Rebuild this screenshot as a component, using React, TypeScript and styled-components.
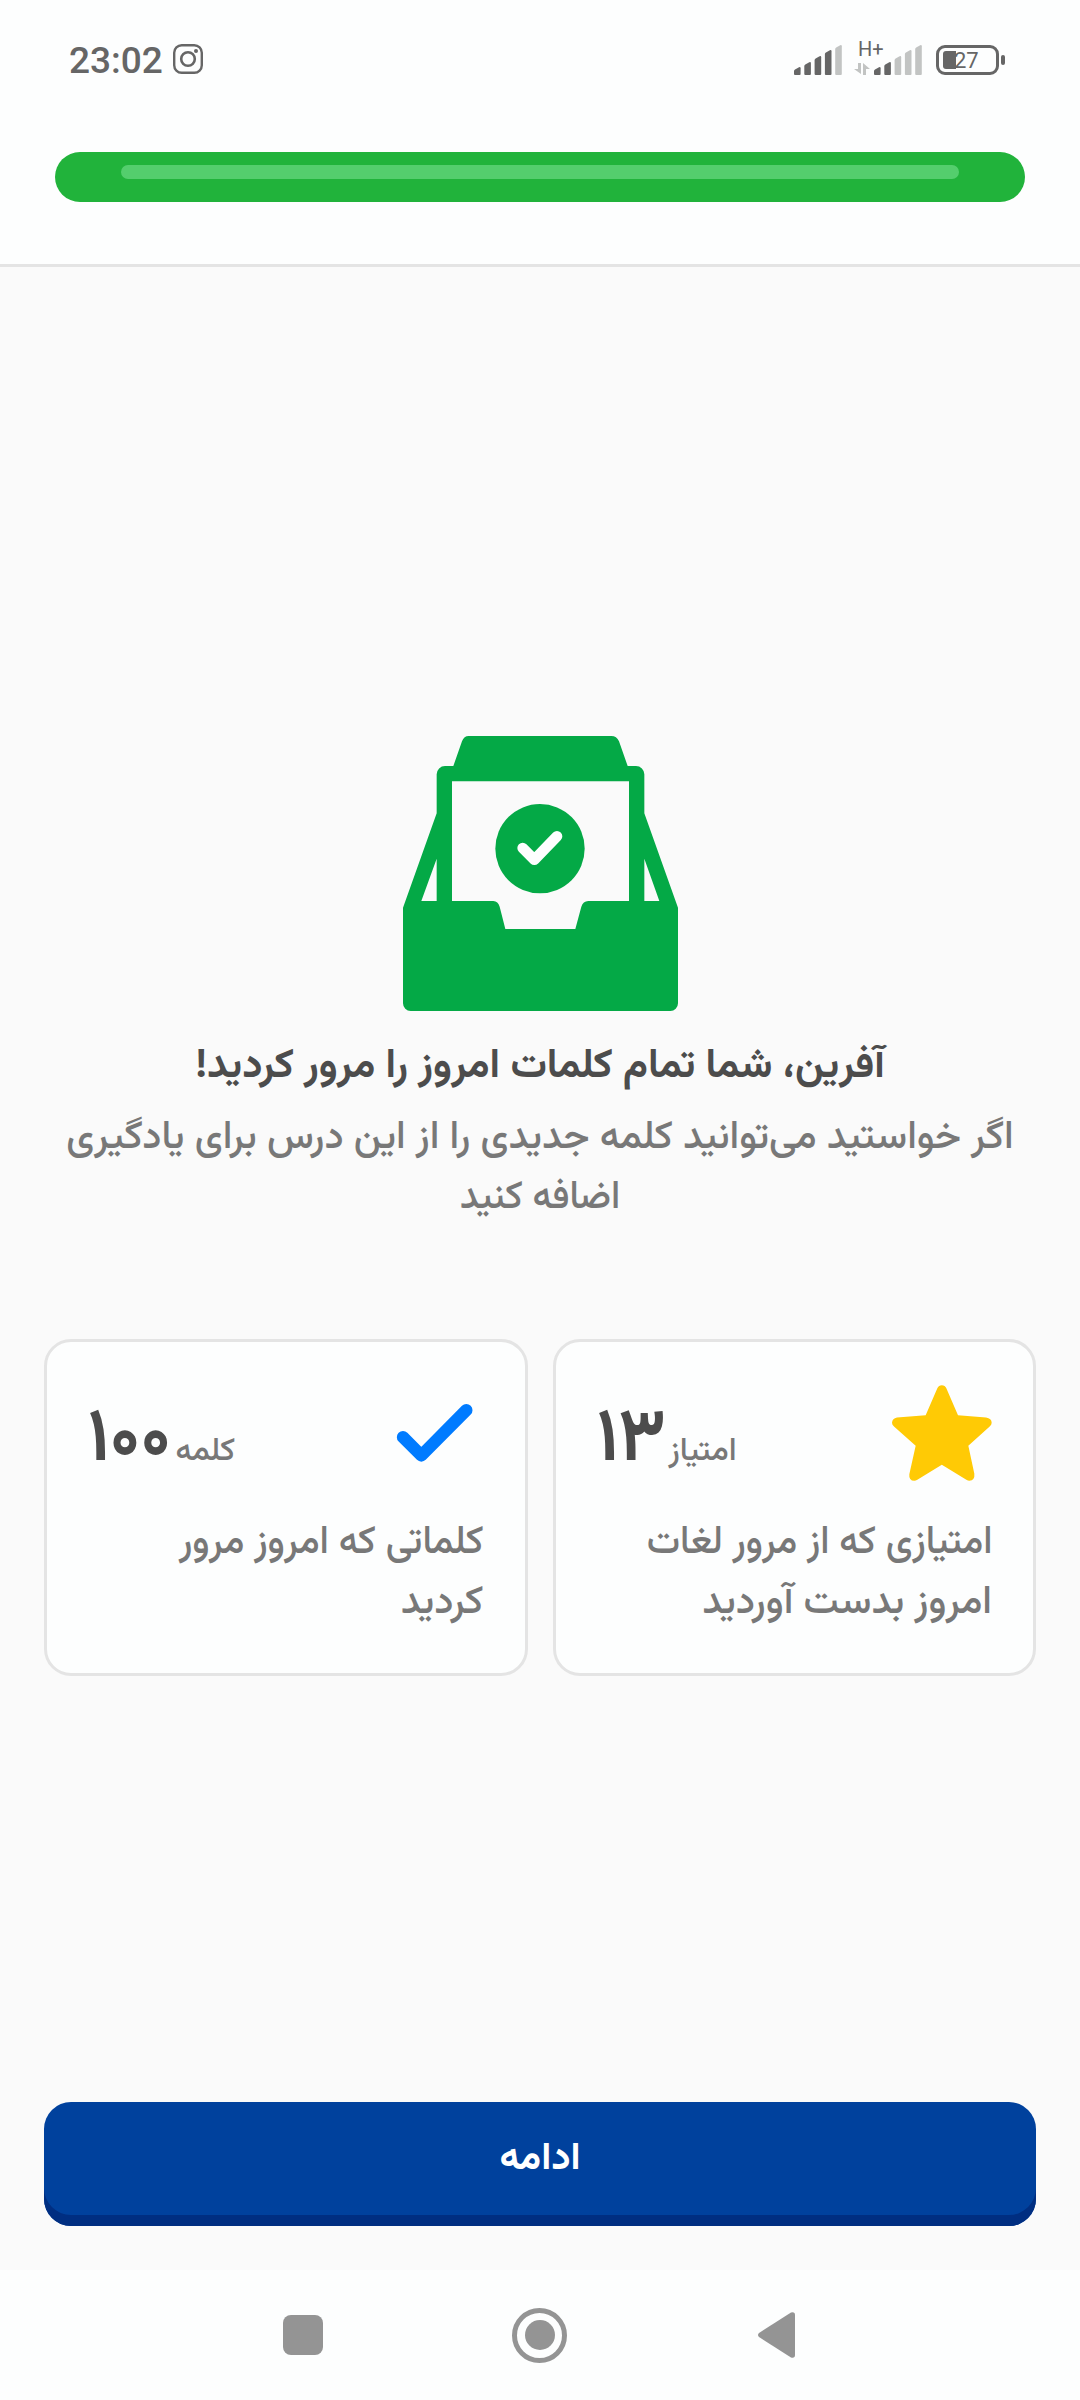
import React from 'react';
import styled, { createGlobalStyle } from 'styled-components';

const GlobalStyle = createGlobalStyle`
  * { box-sizing: border-box; }
  body { margin: 0; background: #fafafa; }
`;

const Screen = styled.div`
  display: flex;
  flex-direction: column;
  width: 1080px;
  height: 2400px;
  overflow: hidden;
  background: #fafafa;
  font-family: Vazirmatn, 'Noto Sans Arabic', 'DejaVu Sans Condensed', sans-serif;
`;

const Header = styled.header`
  height: 267px;
  background: #fdfefe;
  border-bottom: 3px solid #e4e4e4;
`;

const StatusBar = styled.div`
  display: flex;
  align-items: center;
  height: 118px;
  padding: 0 75px 0 69px;
  font-family: Roboto, sans-serif;
  color: #666;
`;

const Clock = styled.span`
  font-size: 37px;
  font-weight: 500;
  line-height: 44px;
  margin: 3px 10px 0 0;
`;

const StatusRight = styled.div`
  display: flex;
  align-items: center;
  margin: 1px 0 0 auto;
`;

const Network = styled.div`
  display: flex;
  flex-direction: column;
  width: 20px;
  height: 40px;
  margin-left: 12px;
`;

const NetworkType = styled.span`
  font-size: 20px;
  line-height: 20px;
  margin: -1px 0 4px 4px;
`;

const Battery = styled.div`
  display: flex;
  align-items: center;
  margin-left: 14px;
`;

const BatteryBody = styled.div`
  display: flex;
  align-items: center;
  width: 63px;
  height: 30px;
  padding-left: 4px;
  border: 3px solid #666;
  border-radius: 9px;
`;

const BatteryLevel = styled.div`
  width: 13px;
  height: 18px;
  border-radius: 3px 0 0 3px;
  background: #666;
`;

const BatteryText = styled.span`
  margin: 2px 0 0 -2px;
  font-size: 22px;
  line-height: 24px;
`;

const BatteryTip = styled.div`
  width: 4px;
  height: 10px;
  margin-left: 2px;
  border-radius: 2px;
  background: #666;
`;

const Progress = styled.div`
  height: 50px;
  margin: 34px 55px 0;
  padding: 13px 66px;
  border-radius: 25px;
  background: #21b33b;
`;

const ProgressShine = styled.div`
  height: 14px;
  border-radius: 7px;
  background: #54ce6d;
`;

const Content = styled.main`
  display: flex;
  flex-direction: column;
  align-items: center;
  height: 2003px;
  padding: 469px 44px 0;
`;

const Title = styled.h1`
  margin: 24px 0 0;
  font-size: 40.7px;
  font-weight: 700;
  line-height: 64px;
  color: #4c4c4c;
  white-space: nowrap;
`;

const Message = styled.p`
  width: 980px;
  margin: 10px 0 0;
  font-size: 39.2px;
  font-weight: 500;
  line-height: 60px;
  text-align: center;
  color: #787878;
`;

const Line = styled.span<{ $stretch?: number; $from?: string }>`
  display: block;
  white-space: nowrap;
  transform: scaleX(${({ $stretch = 1 }) => $stretch});
  transform-origin: ${({ $from = 'right' }) => $from};
`;

const Cards = styled.div`
  display: grid;
  grid-template-columns: 1fr 1fr;
  gap: 25px;
  width: 992px;
  margin-top: 110px;
`;

const Card = styled.section`
  height: 337px;
  padding: 41px 41px 0;
  border: 3px solid #e4e4e4;
  border-radius: 27px;
  background: #fdfefe;
`;

const CardTop = styled.div`
  display: flex;
  justify-content: space-between;
  align-items: center;
  height: 100px;
`;

const Score = styled.div`
  display: flex;
  align-items: baseline;
  flex-direction: row-reverse;
  padding-top: 18px;
`;

const ScoreValue = styled.span`
  font-size: 75px;
  font-weight: 700;
  line-height: 90px;
  color: #4c4c4c;
  transform: scaleX(0.93);
  transform-origin: left;
`;

const ScoreUnit = styled.span`
  margin-left: -2px;
  font-size: 32px;
  font-weight: 500;
  line-height: 60px;
  color: #787878;
`;

const CardText = styled.p`
  margin: 31px 0 0;
  font-size: 39.3px;
  font-weight: 500;
  line-height: 60px;
  color: #787878;
`;

const ContinueButton = styled.button`
  width: 992px;
  height: 124px;
  margin: auto 0 44px;
  padding: 0 0 8px;
  border: 0;
  border-radius: 27px;
  background: #00419d;
  box-shadow: inset 0 -11px 0 #002e81;
  font-family: inherit;
  font-size: 38.8px;
  font-weight: 700;
  line-height: 60px;
  color: #fff;
`;

const NavBar = styled.nav`
  display: flex;
  align-items: center;
  height: 130px;
  padding-left: 283px;
  background: #fdfefe;
  color: #949494;
`;

const RecentsIcon = styled.div`
  width: 40px;
  height: 40px;
  border-radius: 8px;
  background: currentColor;
`;

const HomeIcon = styled.div`
  width: 55px;
  height: 55px;
  margin: 0 191px 0 189px;
  border: 5px solid currentColor;
  border-radius: 50%;
  padding: 7.5px;

  &::before {
    content: '';
    display: block;
    height: 30px;
    border-radius: 50%;
    background: currentColor;
  }
`;

const InstagramIcon = () => (
  <svg width="30" height="30" viewBox="0 0 30 30" fill="none" stroke="#666">
    <rect x="1.2" y="1.2" width="27.6" height="27.6" rx="7.5" strokeWidth="2.4" />
    <circle cx="15" cy="15" r="6.8" strokeWidth="2.6" />
    <circle cx="23" cy="7" r="2" fill="#666" stroke="none" />
  </svg>
);

const Signal = ({ level }: { level: number }) => (
  <svg width="48" height="30" viewBox="0 0 48 30">
    {[8, 13, 19, 25, 30].map((h, i) => (
      <path
        key={h}
        d={`M${i * 10.3} 29V${34 - h}q0 -1 1 -1.6l4 -2.2q1.6 -.6 1.6 1V29q0 1 -1 1h-4.6q-1 0 -1 -1Z`}
        fill={i < level ? '#666' : '#c2c4c3'}
      />
    ))}
  </svg>
);

const DataArrows = () => (
  <svg width="16" height="12" viewBox="0 0 16 12" fill="#c2c4c3">
    <path d="M4 0H7V11L0 6H4ZM9 12V0L16 6H12V12Z" />
  </svg>
);

const TrayIcon = () => (
  <svg width="275" height="275" viewBox="69 78 825 825">
    <path
      fill="#04a946"
      fillRule="evenodd"
      d="M266 78H694Q710 78 717 94L743 168H768A25 25 0 0 1 793 193V310L894 593V880A23 23 0 0 1 871 903H92A23 23 0 0 1 69 880V593L170 310V193A25 25 0 0 1 195 168H220L246 94Q252 78 266 78ZM216 214V573H340Q354 574 359 590L376 657H586L604 590Q609 574 625 573H747V214ZM170 446V573H124ZM793 446V573H838Z"
    />
    <circle cx="480" cy="416" r="134" fill="#04a946" />
    <path d="M428 414L463 449L531 379" fill="none" stroke="#fdfefe" strokeWidth="32" strokeLinecap="round" strokeLinejoin="round" />
  </svg>
);

const StarIcon = () => (
  <svg width="100" height="96" viewBox="1058 194 300 287">
    <path
      fill="#ffca05"
      d="M1194 203Q1198 194 1207.500 194Q1217 194 1221 203L1256 284L1340 291Q1357 294 1357 307Q1357 313 1351 318L1287 376L1305 460Q1307 480 1290 481Q1286 481 1281 478L1207.500 433L1134 478Q1129 481 1125 481Q1108 480 1110 461L1129 376L1064 318Q1058 313 1058 307Q1059 294 1073 291L1159 284Z"
    />
  </svg>
);

const CheckIcon = () => (
  <svg width="100" height="96" viewBox="1062 194 300 287">
    <path d="M1119 350L1174 405L1309 269" fill="none" stroke="#007bff" strokeWidth="37" strokeLinecap="round" strokeLinejoin="round" />
  </svg>
);

const BackIcon = () => (
  <svg width="37" height="46" viewBox="0 0 37 46" fill="currentColor">
    <path d="M1 21L33 .5Q37 -.5 37 3V43Q37 46.500 33 45.500L1 25Q-1 23 1 21Z" />
  </svg>
);

const stats = [
  { value: '۱۳', unit: 'امتیاز', text: ['امتیازی که از مرور لغات', 'امروز بدست آوردید'], stretch: 0.956, Icon: StarIcon },
  { value: '۱۰۰', unit: 'کلمه', text: ['کلماتی که امروز مرور', 'کردید'], stretch: 0.966, Icon: CheckIcon },
];

export default function App() {
  return (
    <Screen>
      <GlobalStyle />
      <Header>
        <StatusBar>
          <Clock>23:02</Clock>
          <InstagramIcon />
          <StatusRight>
            <Signal level={4} />
            <Network>
              <NetworkType>H+</NetworkType>
              <DataArrows />
            </Network>
            <Signal level={2} />
            <Battery>
              <BatteryBody>
                <BatteryLevel />
                <BatteryText>27</BatteryText>
              </BatteryBody>
              <BatteryTip />
            </Battery>
          </StatusRight>
        </StatusBar>
        <Progress>
          <ProgressShine />
        </Progress>
      </Header>
      <Content dir="rtl">
        <TrayIcon />
        <Title>آفرین، شما تمام کلمات امروز را مرور کردید!</Title>
        <Message>
          <Line>اگر خواستید می‌توانید کلمه جدیدی را از این درس برای یادگیری</Line>
          <Line $stretch={0.955} $from="center">اضافه کنید</Line>
        </Message>
        <Cards>
          {stats.map(({ value, unit, text, stretch, Icon }) => (
            <Card key={unit}>
              <CardTop>
                <Icon />
                <Score>
                  <ScoreValue>{value}</ScoreValue>
                  <ScoreUnit>{unit}</ScoreUnit>
                </Score>
              </CardTop>
              <CardText>
                <Line $stretch={stretch}>{text[0]}</Line>
                <Line>{text[1]}</Line>
              </CardText>
            </Card>
          ))}
        </Cards>
        <ContinueButton>ادامه</ContinueButton>
      </Content>
      <NavBar>
        <RecentsIcon />
        <HomeIcon />
        <BackIcon />
      </NavBar>
    </Screen>
  );
}
